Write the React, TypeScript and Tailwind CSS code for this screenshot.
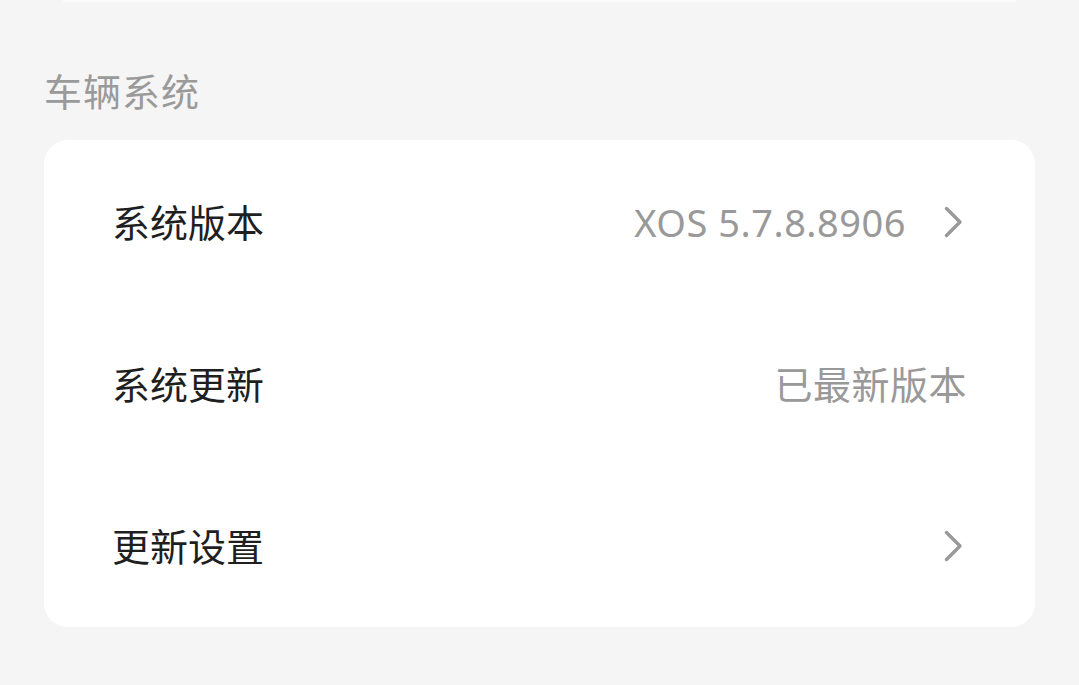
import { ReactNode } from 'react';

const FONT = '"Noto Sans", "Noto Sans CJK SC", sans-serif';

function Chevron() {
  return (
    <svg width="24" height="32" viewBox="0 0 24 32" fill="none" className="shrink-0">
      <path d="M3.5 2.5 L17 16 L3.5 29.5" stroke="#999999" strokeWidth="3.4" strokeLinecap="round" strokeLinejoin="round" />
    </svg>
  );
}

function Row({ label, value, arrow }: { label: string; value?: ReactNode; arrow?: boolean }) {
  return (
    <div className="flex items-center justify-between h-[162px] px-[68px]">
      <span className="text-[38px] leading-none text-[#1f1f1f]">{label}</span>
      <div className="flex items-center gap-[37px]">
        {value && <span className="text-[38px] leading-none tracking-[0.5px] text-[#999999]">{value}</span>}
        {arrow && <Chevron />}
      </div>
    </div>
  );
}

export default function App() {
  return (
    <div className="w-full h-[685px] bg-[#f5f5f5] px-[44px] overflow-hidden" style={{ fontFamily: FONT }}>
      {/* edge of the card scrolled off above */}
      <div className="mx-[19px] h-[2px] bg-[#fbfbfb]" />

      <div className="mt-[66px] h-[46px] leading-[46px] text-[38px] text-[#9a9a9a] tracking-[1px]">车辆系统</div>

      <div className="mt-[26px] bg-white rounded-[24px] py-[0.5px]">
        <Row label="系统版本" value="XOS 5.7.8.8906" arrow />
        <Row label="系统更新" value="已最新版本" />
        <Row label="更新设置" arrow />
      </div>
    </div>
  );
}
